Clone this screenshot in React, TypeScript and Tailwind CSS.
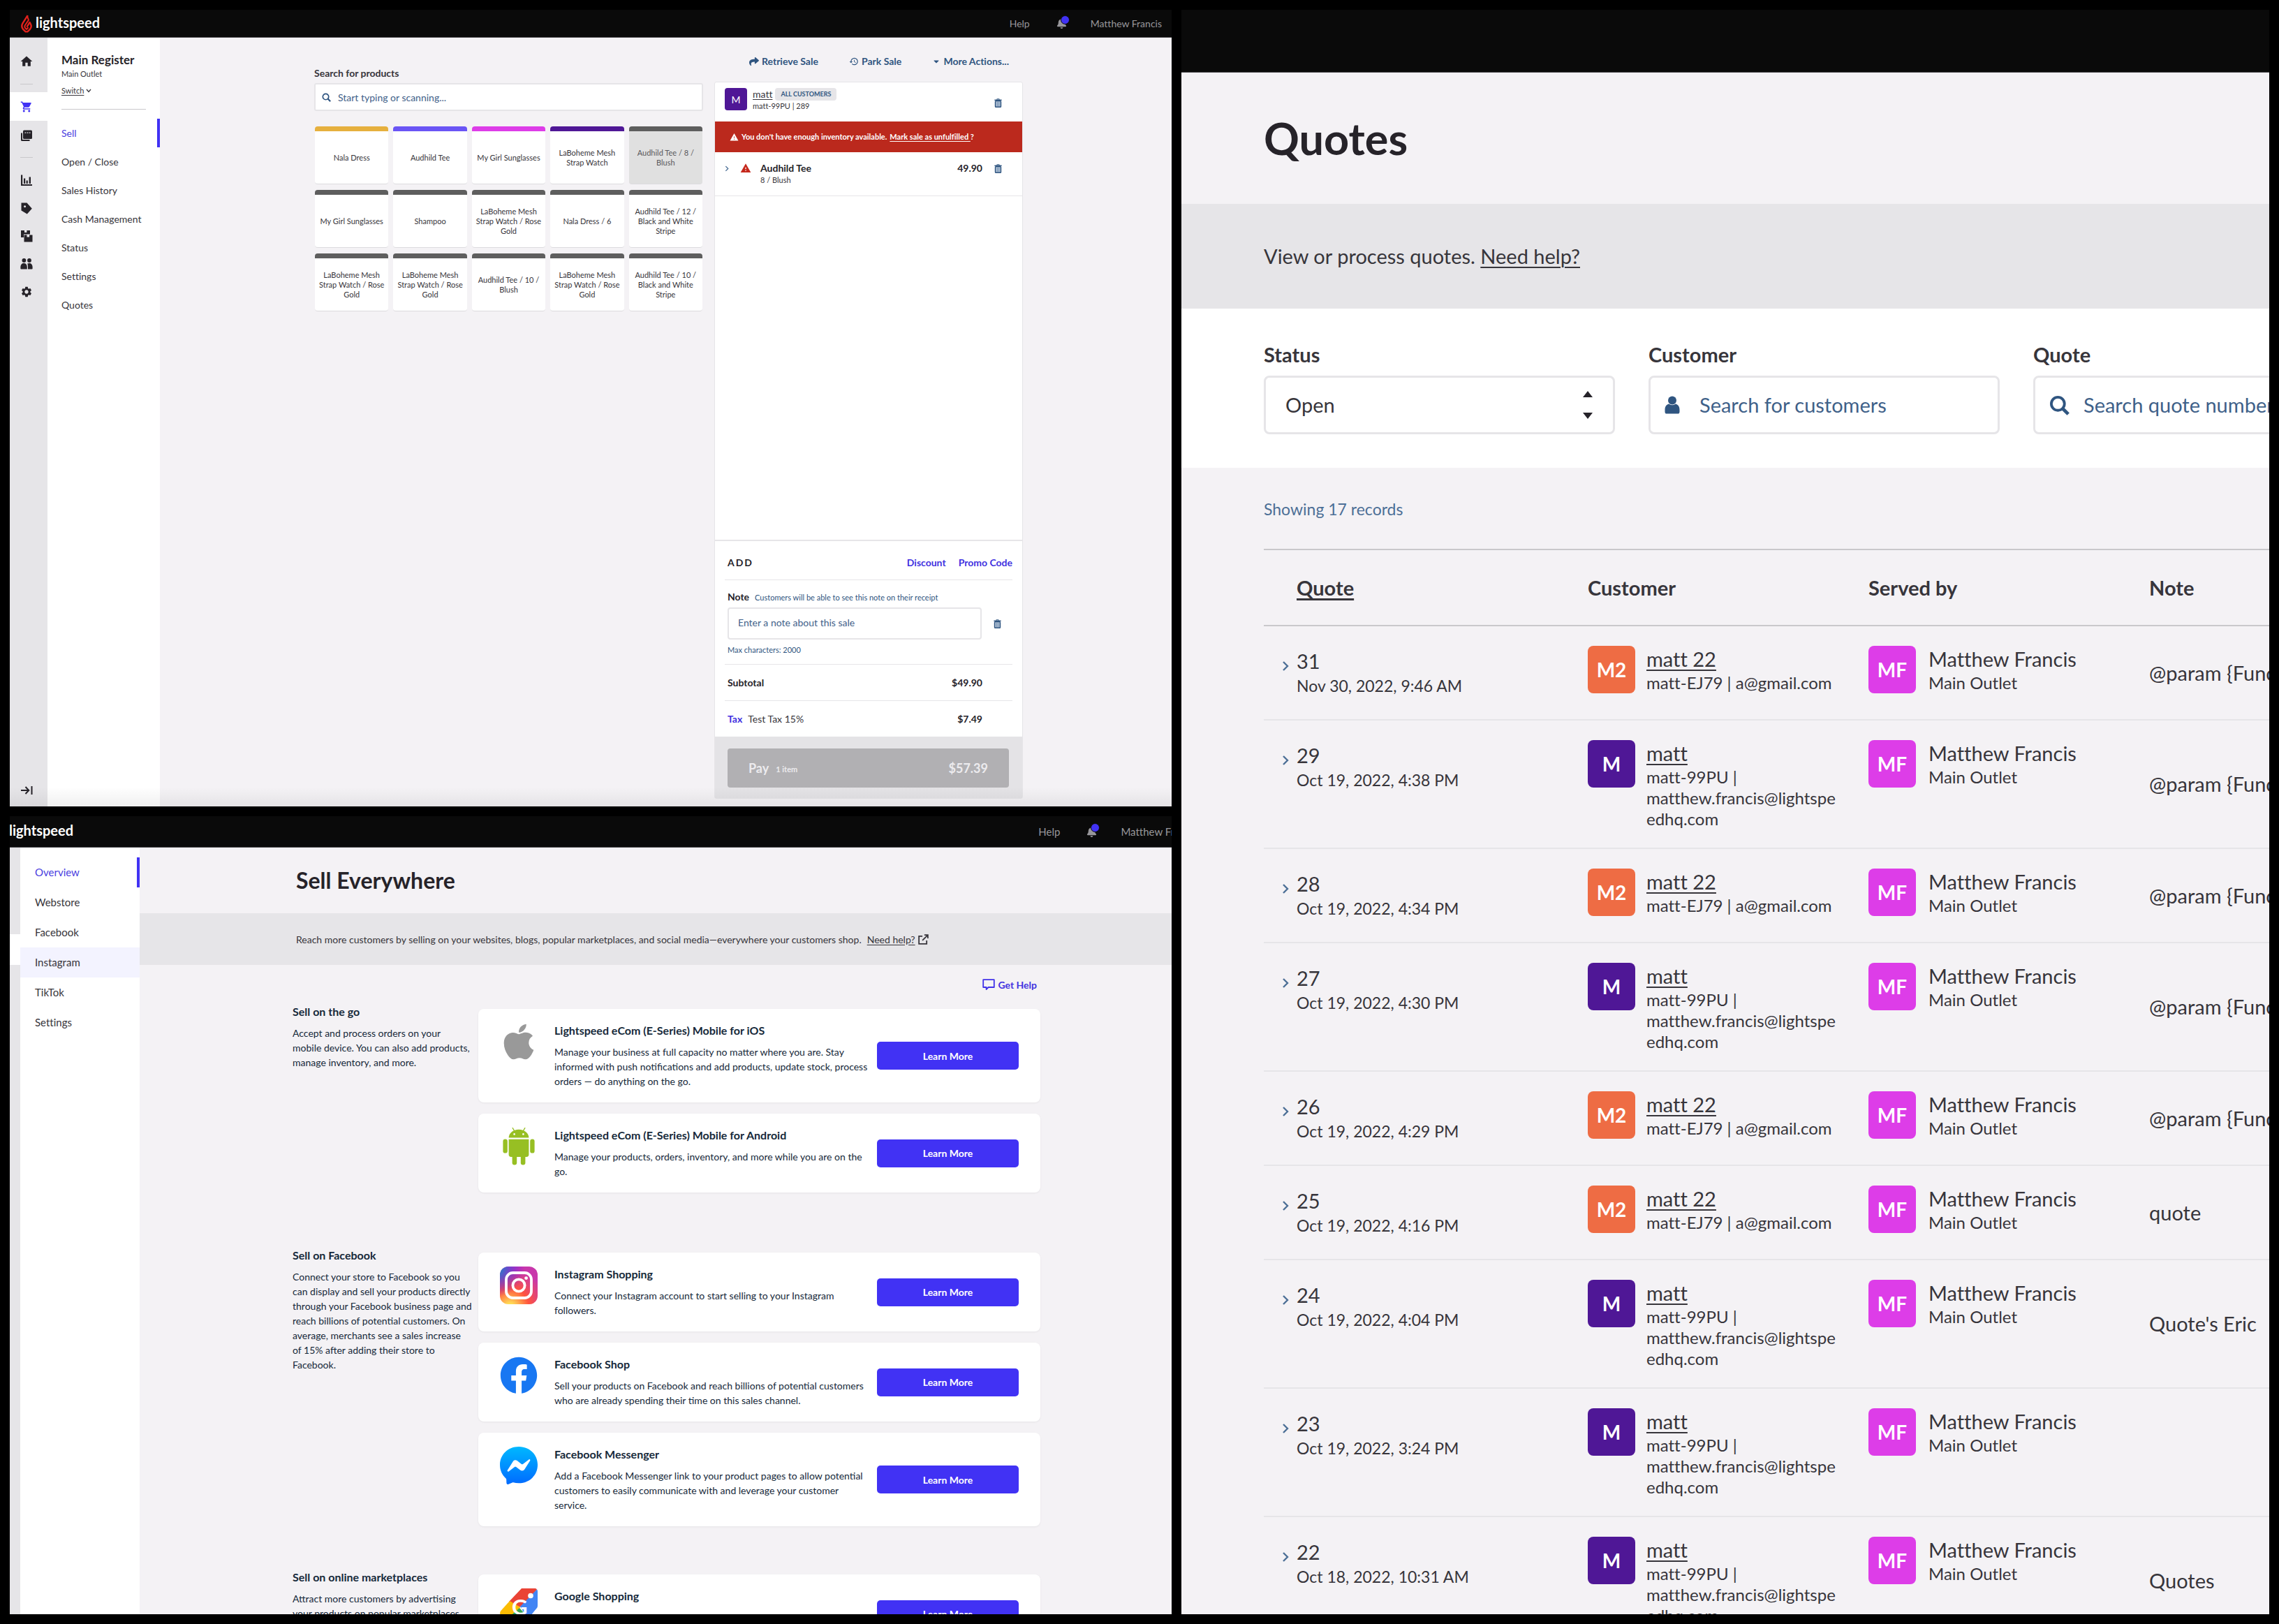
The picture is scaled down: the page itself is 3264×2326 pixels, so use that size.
import type { ReactNode } from 'react';
import { FaApple, FaBell, FaCaretDown, FaFacebook, FaShare } from 'react-icons/fa';
import { MdHistory, MdHome, MdSettings, MdShoppingCart, MdWarning } from 'react-icons/md';

/* ---------- icons ---------- */

function Flame() {
  return (
    <svg viewBox="0 0 16 26" className="h-[26px] w-4 shrink-0" fill="none" stroke="#e3221c" strokeWidth="2.4" strokeLinejoin="round" aria-hidden="true">
      <path d="M9.6 1.2 L2.6 12.2 C0.9 15 1 18.3 3 20.8 L6.6 24.4 H9.4 L13 20.8 C15 18.3 15 15.4 13.8 13.2 L12.6 11 L8.4 17.6" />
      <path d="M9.4 1.2 V3.6 L11 7.6 L5.8 15.2 C5 16.8 5.4 18.4 6.4 19.4 L8 21 L10.6 18.2" strokeWidth="2" />
    </svg>
  );
}

function SearchIcon({ className }: { className: string }) {
  return (
    <svg viewBox="0 0 16 16" className={className} fill="none" stroke="#2f5580" strokeWidth="2.1" aria-hidden="true">
      <circle cx="6.8" cy="6.8" r="5.2" />
      <path d="M10.6 10.6 L15 15" strokeWidth="2.6" />
    </svg>
  );
}

function RegisterIcon() {
  return (
    <svg viewBox="0 0 18 18" className="size-[18px]" fill="#262329" aria-hidden="true">
      <path d="M1 5.5 h2 V15 h10.5 v2 H2.5 A1.5 1.5 0 0 1 1 15.5 Z" />
      <rect x="4" y="1.5" width="13" height="12.5" rx="1.5" />
      <path d="M6.5 4.5 h1.8 v1.3 h-1.8 z M9.6 4.5 h1.8 v1.3 h-1.8 z M12.7 4.5 h1.8 v1.3 h-1.8 z" fill="#e6e5e8" />
    </svg>
  );
}

function ReportIcon() {
  return (
    <svg viewBox="0 0 18 18" className="size-[18px]" fill="#262329" aria-hidden="true">
      <path d="M1 1.5 h2.2 V15 H17 v2 H1 Z" />
      <path d="M5 6.5 h2.2 V14 H5 Z M8.6 9.5 h2.2 V14 H8.6 Z M12.6 4.5 h2.4 V14 h-2.4 Z" />
    </svg>
  );
}

function TagIcon() {
  return (
    <svg viewBox="0 0 18 18" className="size-[18px]" fill="#262329" aria-hidden="true">
      <path fillRule="evenodd" d="M1.5 1.5 H9.5 L16.8 9.8 L9.8 17.6 L1.5 12.5 Z M6.6 5.2 a1.5 1.5 0 1 0 .01 0 Z" />
    </svg>
  );
}

function BoxesIcon() {
  return (
    <svg viewBox="0 0 18 18" className="size-[18px]" fill="#262329" aria-hidden="true">
      <path d="M1 1 h5 v3 h3.4 V1 H14 v5.4 H5 V11 H1 Z" />
      <path d="M5.5 7.5 h4 v3 h3.6 v-3 H17.5 V17.5 H5.5 Z" />
    </svg>
  );
}

function PeopleIcon() {
  return (
    <svg viewBox="0 0 18 18" className="size-[18px]" fill="#262329" aria-hidden="true">
      <circle cx="5.4" cy="4" r="2.9" />
      <circle cx="13" cy="4" r="2.9" />
      <path d="M0.4 13.5 C0.4 10 2.5 8 5.2 8 C8 8 9.8 10 9.8 13.5 V16.6 H1.6 C0.8 16.6 0.4 16 0.4 15.4 Z" />
      <path d="M10.3 8.6 C11 8.2 11.8 8 12.8 8 C15.6 8 17.6 10 17.6 13.5 V15.4 C17.6 16 17.2 16.6 16.4 16.6 H11 V13.5 C11 11.6 10.8 10 10.3 8.6 Z" />
    </svg>
  );
}

function ExpandIcon() {
  return (
    <svg viewBox="0 0 18 14" className="h-[14px] w-[18px]" fill="none" stroke="#262329" strokeWidth="2" aria-hidden="true">
      <path d="M1 7 H12 M7.5 2 L12.3 7 L7.5 12 M16.5 1 V13" />
    </svg>
  );
}

function TrashIcon() {
  return (
    <svg viewBox="0 0 11 13" className="h-[13px] w-[11px]" aria-hidden="true">
      <path d="M3.8 1.8 V0.8 H7.2 V1.8" fill="none" stroke="#2f5580" />
      <rect x="0.4" y="1.6" width="10.2" height="1.5" fill="#2f5580" />
      <rect x="1.5" y="3.6" width="8" height="8.7" rx="0.8" fill="#a9bbd0" stroke="#2f5580" strokeWidth="1.4" />
      <path d="M4.5 5 V11 M6.6 5 V11" stroke="#7390b1" strokeWidth="0.8" />
    </svg>
  );
}

function ChevronRight({ className }: { className: string }) {
  return (
    <svg viewBox="0 0 10 16" className={className} fill="none" stroke="#4c6f96" strokeWidth="2.4" aria-hidden="true">
      <path d="M2 2 L8 8 L2 14" />
    </svg>
  );
}

function ChatIcon() {
  return (
    <svg viewBox="0 0 18 16" className="h-4 w-[18px]" fill="none" stroke="#4132e8" strokeWidth="1.8" strokeLinejoin="round" aria-hidden="true">
      <path d="M1.2 1.2 H16.8 V12 H8.6 L5.6 15 V12 H1.2 Z" />
    </svg>
  );
}

function ExternalIcon() {
  return (
    <svg viewBox="0 0 16 16" className="size-[15px]" fill="none" stroke="#37353b" strokeWidth="1.9" aria-hidden="true">
      <path d="M6.5 3 H1.2 V14.8 H13 V9.5 M9.5 1.2 H14.8 V6.5 M14.6 1.4 L6.5 9.5" />
    </svg>
  );
}

function UserIcon() {
  return (
    <svg viewBox="0 0 22 26" className="h-[26px] w-[22px]" fill="#2f5580" aria-hidden="true">
      <circle cx="11" cy="6.5" r="6" />
      <path d="M0.5 20 C0.5 14.5 3.5 12 6.5 11.6 C9 13.8 13 13.8 15.5 11.6 C18.5 12 21.5 14.5 21.5 20 V23 C21.5 24.6 20.4 25.6 19 25.6 H3 C1.6 25.6 0.5 24.6 0.5 23 Z" />
    </svg>
  );
}

function AndroidLogo() {
  return (
    <svg viewBox="0 0 46 54" className="h-[54px] w-[46px]" fill="#97bf23" aria-hidden="true">
      <path d="M8.6 14.6 C8.6 8 15 2.8 23 2.8 C31 2.8 37.4 8 37.4 14.6 Z" />
      <path d="M14.2 0.6 L17.4 5.8 M31.8 0.6 L28.6 5.8" stroke="#97bf23" strokeWidth="1.3" strokeLinecap="round" />
      <circle cx="16.6" cy="9.4" r="1.3" fill="#fff" />
      <circle cx="29.4" cy="9.4" r="1.3" fill="#fff" />
      <path d="M8.6 16.8 H37.4 V38.6 A3.4 3.4 0 0 1 34 42 H12 A3.4 3.4 0 0 1 8.6 38.6 Z" />
      <rect x="0.4" y="16.6" width="6.4" height="20" rx="3.2" />
      <rect x="39.2" y="16.6" width="6.4" height="20" rx="3.2" />
      <rect x="13.6" y="36" width="6.6" height="17.6" rx="3.3" />
      <rect x="25.8" y="36" width="6.6" height="17.6" rx="3.3" />
    </svg>
  );
}

function InstagramLogo() {
  return (
    <svg viewBox="0 0 54 54" className="size-[54px]" aria-hidden="true">
      <defs>
        <radialGradient id="ig-warm" cx="0.27" cy="1.08" r="1">
          <stop offset="0" stopColor="#ffdd55" />
          <stop offset="0.1" stopColor="#ffdd55" />
          <stop offset="0.5" stopColor="#ff543e" />
          <stop offset="1" stopColor="#c837ab" />
        </radialGradient>
        <radialGradient id="ig-cool" cx="-0.1" cy="0.05" r="0.75">
          <stop offset="0" stopColor="#3771c8" />
          <stop offset="0.2" stopColor="#3771c8" />
          <stop offset="1" stopColor="#6600ff" stopOpacity="0" />
        </radialGradient>
      </defs>
      <rect width="54" height="54" rx="12" fill="url(#ig-warm)" />
      <rect width="54" height="54" rx="12" fill="url(#ig-cool)" />
      <g fill="none" stroke="#fff" strokeWidth="3.8">
        <rect x="9" y="9" width="36" height="36" rx="9.5" />
        <circle cx="27" cy="27" r="8.6" />
      </g>
      <circle cx="37.6" cy="16.6" r="2.4" fill="#fff" />
    </svg>
  );
}

function MessengerLogo() {
  return (
    <svg viewBox="0 0 54 54" className="size-[54px]" aria-hidden="true">
      <defs>
        <linearGradient id="msgr" x1="0" y1="0" x2="0" y2="1">
          <stop offset="0" stopColor="#00b8ff" />
          <stop offset="1" stopColor="#006bff" />
        </linearGradient>
      </defs>
      <path d="M27 0 C11.8 0 0 11.1 0 26.1 C0 34 3.2 40.8 8.5 45.5 C9 45.9 9.2 46.5 9.2 47.1 L9.4 51.9 C9.4 53.4 11 54.4 12.4 53.8 L17.7 51.4 C18.2 51.2 18.7 51.2 19.1 51.3 C21.6 52 24.2 52.3 27 52.3 C42.2 52.3 54 41.2 54 26.1 C54 11.1 42.2 0 27 0 Z" fill="url(#msgr)" />
      <path d="M10.8 33.8 L18.7 21.2 C20 19.2 22.7 18.7 24.6 20.1 L30.9 24.9 C31.5 25.3 32.3 25.3 32.9 24.9 L41.4 18.4 C42.5 17.5 44 18.9 43.2 20.1 L35.3 32.6 C34 34.6 31.3 35.1 29.4 33.7 L23.1 29 C22.5 28.6 21.7 28.6 21.1 29 L12.6 35.5 C11.5 36.3 10 35 10.8 33.8 Z" fill="#fff" />
    </svg>
  );
}

function GoogleShoppingLogo() {
  return (
    <svg viewBox="0 0 54 54" className="size-[54px]" aria-hidden="true">
      <path d="M31 0 L13 19 L29 27 L46 10 L53 1.5 C52.4 .6 51.4 0 50 0 Z" fill="#ea4335" />
      <path d="M14 18 L1.4 32 C-.4 34.2 -.4 36.6 1.4 38.6 L14 52 L29 27 Z" fill="#fbbc04" />
      <path d="M53 1.4 L29 26 L40 44 L53 28 C53.8 26.8 54 26 54 24 V5 C54 3.4 53.8 2.4 53 1.4 Z" fill="#4285f4" />
      <path d="M8 45.5 L28 28 L41 42.5 L31 52.5 C29 54.4 26 54.4 24 52.8 L16 54 Z" fill="#34a853" />
      <circle cx="44" cy="10.5" r="3.8" fill="#fff" />
      <text x="17" y="38" fontFamily="Lato, sans-serif" fontWeight="700" fontSize="31" fill="#fff">G</text>
    </svg>
  );
}

/* ---------- shared ---------- */

function Brand() {
  return (
    <a href="#home" className="flex shrink-0 items-center gap-[5px] text-[20px] leading-6 font-bold text-white" aria-label="lightspeed">
      <Flame />
      <span className="pb-1">lightspeed</span>
    </a>
  );
}

function AccountLinks() {
  return (
    <>
      <a href="#help">Help</a>
      <button type="button" className="relative mr-[30px] ml-[38px] h-4 w-[19px]" aria-label="Notifications">
        <FaBell className="size-[15px] text-[#98979b]" />
        <span className="absolute -top-1 right-0 size-[13px] rounded-full border border-[#0a0a0a] bg-[#4132f4]" />
      </button>
      <a href="#account">Matthew Francis</a>
    </>
  );
}

function NavItem({ label, active, className }: { label: string; active?: boolean; className: string }) {
  return (
    <li>
      <a
        href={`#${label}`}
        className={`flex items-center border-r-4 ${active ? 'border-[#4132f4] text-[#4a3ee0]' : 'border-transparent text-[#37353b]'} ${className}`}
      >
        {label}
      </a>
    </li>
  );
}

/* ---------- register ---------- */

const tiles: { label: string; bar: string; pressed?: boolean }[] = [
  { label: 'Nala Dress', bar: 'bg-[#e6b03e]' },
  { label: 'Audhild Tee', bar: 'bg-[#6a55f5]' },
  { label: 'My Girl Sunglasses', bar: 'bg-[#dd3de8]' },
  { label: 'LaBoheme Mesh Strap Watch', bar: 'bg-[#4f1796]' },
  { label: 'Audhild Tee / 8 / Blush', bar: 'bg-[#5e5e5e]', pressed: true },
  { label: 'My Girl Sunglasses', bar: 'bg-[#5e5e5e]' },
  { label: 'Shampoo', bar: 'bg-[#5e5e5e]' },
  { label: 'LaBoheme Mesh Strap Watch / Rose Gold', bar: 'bg-[#5e5e5e]' },
  { label: 'Nala Dress / 6', bar: 'bg-[#5e5e5e]' },
  { label: 'Audhild Tee / 12 / Black and White Stripe', bar: 'bg-[#5e5e5e]' },
  { label: 'LaBoheme Mesh Strap Watch / Rose Gold', bar: 'bg-[#5e5e5e]' },
  { label: 'LaBoheme Mesh Strap Watch / Rose Gold', bar: 'bg-[#5e5e5e]' },
  { label: 'Audhild Tee / 10 / Blush', bar: 'bg-[#5e5e5e]' },
  { label: 'LaBoheme Mesh Strap Watch / Rose Gold', bar: 'bg-[#5e5e5e]' },
  { label: 'Audhild Tee / 10 / Black and White Stripe', bar: 'bg-[#5e5e5e]' },
];

function RailLink({ label, active, className, children }: { label: string; active?: boolean; className: string; children: ReactNode }) {
  return (
    <a href={`#${label}`} aria-label={label} className={`flex items-center ${active ? 'bg-white' : ''} ${className}`}>
      {children}
    </a>
  );
}

function DeleteButton({ label }: { label: string }) {
  return (
    <button type="button" aria-label={label} className="flex w-[45px] shrink-0 justify-center">
      <TrashIcon />
    </button>
  );
}

function Rail() {
  return (
    <nav aria-label="Main" className="flex w-[54px] shrink-0 flex-col bg-[#e6e5e8] pt-[14px]">
      <RailLink label="Home" className="h-10 pl-[14px]"><MdHome className="size-5 text-[#262329]" /></RailLink>
      <hr className="mt-3 mb-[11px] ml-[15px] w-[18px] border-[#c9c8cb]" />
      <RailLink label="Sell" active className="h-[41px] pl-[15px]"><MdShoppingCart className="size-[18px] text-[#4132f4]" /></RailLink>
      <RailLink label="Register" className="h-[41px] pl-[15px]"><RegisterIcon /></RailLink>
      <hr className="mt-[11px] mb-3 ml-[15px] w-[18px] border-[#c9c8cb]" />
      <RailLink label="Reporting" className="h-10 pl-[15px]"><ReportIcon /></RailLink>
      <RailLink label="Catalog" className="h-10 pl-[15px]"><TagIcon /></RailLink>
      <RailLink label="Inventory" className="h-10 pl-[15px]"><BoxesIcon /></RailLink>
      <RailLink label="Customers" className="h-10 pl-[15px]"><PeopleIcon /></RailLink>
      <RailLink label="Setup" className="h-10 pl-[15px]"><MdSettings className="size-[18px] text-[#262329]" /></RailLink>
      <button type="button" aria-label="Expand menu" className="mt-auto flex h-[46px] items-center pl-[15px]">
        <ExpandIcon />
      </button>
    </nav>
  );
}

function RegisterSidebar() {
  return (
    <aside className="w-[161px] shrink-0 bg-white pt-5">
      <div className="px-5">
        <h2 className="text-[17px] leading-6 font-bold text-[#262329]">Main Register</h2>
        <p className="text-[11px] leading-4">Main Outlet</p>
        <button type="button" className="mt-2 flex items-center gap-[3px] text-[11px] leading-4">
          <span className="underline underline-offset-2">Switch</span>
          <svg viewBox="0 0 8 6" className="h-1.5 w-2" fill="none" stroke="#37353b" strokeWidth="1.3" aria-hidden="true"><path d="M1 1 L4 4.4 L7 1" /></svg>
        </button>
        <hr className="mt-[18px] border-[#c9c8cb]" />
      </div>
      <nav aria-label="Register">
        <ul className="mt-[13px] text-[14px]">
          {['Sell', 'Open / Close', 'Sales History', 'Cash Management', 'Status', 'Settings', 'Quotes'].map((label) => (
            <NavItem key={label} label={label} active={label === 'Sell'} className="h-[41px] pl-5" />
          ))}
        </ul>
      </nav>
    </aside>
  );
}

function Products() {
  return (
    <section className="pt-[41px]">
      <label htmlFor="product-search" className="block text-[14px] leading-5 font-bold">Search for products</label>
      <div className="mt-1 flex h-10 items-center gap-[10px] rounded-[3px] border-2 border-[#e6e5e8] bg-white pl-[9px]">
        <SearchIcon className="size-[13px]" />
        <input id="product-search" type="text" placeholder="Start typing or scanning..." className="min-w-0 flex-1 text-[14px] outline-none placeholder:text-[#3f6189]" />
      </div>
      <div className="mt-[22px] grid grid-cols-5 gap-x-[7px] gap-y-2 px-px">
        {tiles.map((tile, i) => (
          <button
            key={i}
            type="button"
            className={`flex h-[83px] flex-col overflow-hidden rounded-[4px] border-b border-[#dcdbde] text-[11px] leading-[14px] ${tile.pressed ? 'bg-[#e0e0e0] text-[#59585c]' : 'bg-white text-[#37353b]'}`}
          >
            <span className={`h-[7px] w-full shrink-0 ${tile.bar}`} />
            <span className="flex w-full flex-1 items-center justify-center px-1">{tile.label}</span>
          </button>
        ))}
      </div>
    </section>
  );
}

function Cart() {
  return (
    <section className="flex flex-col pb-[11px]">
      <div className="flex h-[63px] justify-between pt-6 pr-5 pl-[50px] text-[14px] leading-5 font-bold text-[#2f5580]">
        <button type="button" className="flex h-5 items-center gap-1"><FaShare className="size-[14px]" />Retrieve Sale</button>
        <button type="button" className="flex h-5 items-center gap-1"><MdHistory className="size-[14px]" />Park Sale</button>
        <button type="button" className="flex h-5 items-center gap-1"><FaCaretDown className="size-3" />More Actions...</button>
      </div>
      <div className="flex flex-1 flex-col rounded-[3px] border border-[#e6e5e8] bg-white">
        <div className="flex h-14 pt-2 pl-[14px]">
          <span className="flex size-8 items-center justify-center rounded-[4px] bg-[#4f1796] text-[14px] text-white">M</span>
          <div className="ml-2">
            <div className="flex h-[18px] items-center gap-1">
              <a href="#matt" className="text-[14px] leading-[18px] underline underline-offset-2">matt</a>
              <span className="rounded-[4px] bg-[#e6e5e8] px-2 text-[9px] leading-[18px] font-bold text-[#2f5580]">ALL CUSTOMERS</span>
            </div>
            <p className="text-[11px] leading-4">matt-99PU | 289</p>
          </div>
          <div className="mr-[12px] ml-auto flex h-[43px] items-center"><DeleteButton label="Remove customer" /></div>
        </div>
        <div className="flex h-11 items-center bg-[#bb291d] pl-[21px] text-[11px] font-bold text-white">
          <MdWarning className="mr-1 size-[13px]" />
          <span>You don't have enough inventory available.</span>
          <a href="#unfulfilled" className="ml-1 underline underline-offset-2">Mark sale as unfulfilled&nbsp;</a>?
        </div>
        <div className="flex h-[63px] items-start border-b border-[#e6e5e8] pt-[13px] pl-[14px]">
          <button type="button" aria-label="Expand line" className="flex h-5 items-center"><ChevronRight className="h-[9px] w-1.5" /></button>
          <MdWarning className="mt-[2px] ml-4 size-4 text-[#c5281c]" />
          <div className="ml-[13px]">
            <p className="text-[14px] leading-5 font-bold text-[#262329]">Audhild Tee</p>
            <p className="text-[11px] leading-[14px]">8 / Blush</p>
          </div>
          <span className="ml-auto text-[14px] leading-5 font-bold text-[#262329]">49.90</span>
          <div className="mr-[12px] flex h-5 items-center"><DeleteButton label="Remove item" /></div>
        </div>
        <div className="mt-auto border-t-2 border-[#e6e5e8] px-[14px] text-[14px] leading-5">
          <div className="flex h-14 items-center gap-[18px] border-b border-[#e6e5e8] pt-1.5 pl-1 font-bold">
            <span className="mr-auto tracking-[2px] text-[#262329]">ADD</span>
            <button type="button" className="text-[#4132e0]">Discount</button>
            <button type="button" className="text-[#4132e0]">Promo Code</button>
          </div>
          <div className="border-b border-[#e6e5e8] pt-[14px] pb-3 pl-1 text-[#2f5580]">
            <div className="flex items-baseline gap-2">
              <label htmlFor="note" className="font-bold text-[#262329]">Note</label>
              <span className="text-[11px]">Customers will be able to see this note on their receipt</span>
            </div>
            <div className="mt-1 flex items-center">
              <input id="note" type="text" placeholder="Enter a note about this sale" className="h-[46px] min-w-0 flex-1 rounded-[4px] border-2 border-[#e6e5e8] px-[13px] pb-1 outline-none placeholder:text-[#3f6189]" />
              <div className="-mr-px"><DeleteButton label="Remove note" /></div>
            </div>
            <p className="mt-[7px] text-[11px] leading-4">Max characters: 2000</p>
          </div>
          <div className="flex h-[52px] items-center justify-between border-b border-[#e6e5e8] pr-[43px] pl-1 font-bold text-[#262329]">
            <span>Subtotal</span>
            <span>$49.90</span>
          </div>
          <div className="flex h-[51px] items-center pr-[43px] pl-1">
            <button type="button" className="mr-2 font-bold text-[#4132e0]">Tax</button>
            <span>Test Tax 15%</span>
            <span className="ml-auto font-bold text-[#262329]">$7.49</span>
          </div>
        </div>
        <div className="bg-[#e4e3e6] pt-[17px] pr-[19px] pb-[15px] pl-[18px]">
          <button type="button" disabled className="flex h-14 w-full items-center rounded-[4px] bg-[#b1b0b3] px-[30px] text-[18px] font-bold text-[#ecebee]">
            <span>Pay</span>
            <span className="mt-1 ml-[10px] text-[11px]">1 item</span>
            <span className="ml-auto">$57.39</span>
          </button>
        </div>
      </div>
    </section>
  );
}

function RegisterScreen() {
  return (
    <section className="relative flex min-h-0 flex-col overflow-hidden bg-[#f4f2f5] [font-variant-ligatures:none]">
      <header className="flex h-10 shrink-0 items-center justify-between border-b border-[#4b4a4d] bg-[#0a0a0a] pr-[14px] pl-4 text-[14px] text-[#98979b]">
        <Brand />
        <div className="flex items-center"><AccountLinks /></div>
      </header>
      <div className="flex min-h-0 flex-1">
        <Rail />
        <RegisterSidebar />
        <main className="grid flex-1 grid-cols-[557fr_442fr] gap-x-4 pr-[213px] pl-[221px]">
          <Products />
          <Cart />
        </main>
      </div>
      <div className="pointer-events-none absolute inset-x-0 bottom-0 h-7 bg-linear-to-b from-transparent to-black/6" />
    </section>
  );
}

/* ---------- sales channels ---------- */

type Channel = { name: string; text: string; logo: ReactNode };

const channels: { title: string; text: string; className: string; items: Channel[] }[] = [
  {
    title: 'Sell on the go',
    text: 'Accept and process orders on your\nmobile device. You can also add products, manage inventory, and more.',
    className: 'pb-[79px]',
    items: [
      {
        name: 'Lightspeed eCom (E-Series) Mobile for iOS',
        text: 'Manage your business at full capacity no matter where you are. Stay informed with push notifications and add products, update stock, process orders — do anything on the go.',
        logo: <FaApple className="h-[58px] w-[58px] shrink-0 text-[#999999]" />,
      },
      {
        name: 'Lightspeed eCom (E-Series) Mobile for Android',
        text: 'Manage your products, orders, inventory, and more while you are on the go.',
        logo: <AndroidLogo />,
      },
    ],
  },
  {
    title: 'Sell on Facebook',
    text: 'Connect your store to Facebook so you can display and sell your products directly through your Facebook business page and reach billions of potential customers. On average, merchants see a sales increase\nof 15% after adding their store to Facebook.',
    className: 'pb-[62px]',
    items: [
      {
        name: 'Instagram Shopping',
        text: 'Connect your Instagram account to start selling to your Instagram followers.',
        logo: <InstagramLogo />,
      },
      {
        name: 'Facebook Shop',
        text: 'Sell your products on Facebook and reach billions of potential customers who are already spending their time on this sales channel.',
        logo: <FaFacebook className="size-[54px] text-[#1877f2]" />,
      },
      {
        name: 'Facebook Messenger',
        text: 'Add a Facebook Messenger link to your product pages to allow potential customers to easily communicate with and leverage your customer service.',
        logo: <MessengerLogo />,
      },
    ],
  },
  {
    title: 'Sell on online marketplaces',
    text: 'Attract more customers by advertising your products on popular marketplaces.',
    className: '',
    items: [
      {
        name: 'Google Shopping',
        text: 'Increase visibility and connect with more shoppers by listing your products on Google.',
        logo: <GoogleShoppingLogo />,
      },
    ],
  },
];

function ChannelCard({ name, text, logo }: Channel) {
  return (
    <article className="flex items-center rounded-[8px] bg-white px-[31px] py-5 shadow-[0_1px_3px_rgba(0,0,0,0.06)]">
      <div className="flex h-[54px] w-[54px] shrink-0 items-center justify-center self-start">{logo}</div>
      <div className="ml-6 w-[450px] self-start">
        <h3 className="text-[16px] leading-[22px] font-bold">{name}</h3>
        <p className="mt-[9px] text-[14px] leading-[21px]">{text}</p>
      </div>
      <button type="button" className="ml-auto h-10 w-[203px] shrink-0 rounded-[5px] bg-[#4132f4] text-[14px] font-bold text-white">
        Learn More
      </button>
    </article>
  );
}

function ChannelsScreen() {
  return (
    <section className="flex min-h-0 flex-col overflow-hidden bg-[#f4f2f5] [font-variant-ligatures:none]">
      <header className="flex h-[45px] shrink-0 items-center justify-between border-b border-[#4b4a4d] bg-[#0a0a0a] text-[15px] text-[#98979b]">
        <div className="-ml-[22px]"><Brand /></div>
        <div className="-mr-[37px] flex items-center whitespace-nowrap"><AccountLinks /></div>
      </header>
      <div className="flex min-h-0 flex-1">
        <div className="w-[15px] shrink-0 bg-[#e6e5e8] pt-[124px]">
          <div className="h-11 bg-white" />
        </div>
        <nav aria-label="Sales channels" className="w-[171px] shrink-0 bg-white pt-[14px]">
          <ul className="text-[15px]">
            {['Overview', 'Webstore', 'Facebook', 'Instagram', 'TikTok', 'Settings'].map((label) => (
              <NavItem key={label} label={label} active={label === 'Overview'} className={`h-[43px] pl-[21px] ${label === 'Instagram' ? 'bg-[#f3f3ff]' : ''}`} />
            ))}
          </ul>
        </nav>
        <main className="min-w-0 flex-1">
          <div className="flex h-[94px] items-center pl-[224px]">
            <h1 className="text-[32px] leading-10 font-bold text-[#262329]">Sell Everywhere</h1>
          </div>
          <div className="flex h-[74px] items-center bg-[#e6e5e8] pl-[224px] text-[14px]">
            <p>Reach more customers by selling on your websites, blogs, popular marketplaces, and social media—everywhere your customers shop.</p>
            <a href="#need-help" className="ml-2 flex items-center gap-1"><span className="underline underline-offset-2">Need help?</span> <ExternalIcon /></a>
          </div>
          <div className="pr-[188px] pl-[219px] text-[#16293a] [font-variant-ligatures:normal]">
            <div className="mb-[18px] flex justify-end pt-[18px] pr-[5px]">
              <a href="#get-help" className="flex h-5 items-center gap-1 text-[14px] font-bold text-[#4132e0]"><ChatIcon />Get Help</a>
            </div>
            {channels.map((group) => (
              <section key={group.title} className={`grid grid-cols-[260px_1fr] gap-x-1.5 ${group.className}`}>
                <div>
                  <h2 className="text-[16px] leading-[22px] font-bold">{group.title}</h2>
                  <p className="mt-[9px] text-[14px] leading-[21px] whitespace-pre-line">{group.text}</p>
                </div>
                <div className="flex flex-col gap-4 pt-[7px]">
                  {group.items.map((item) => (
                    <ChannelCard key={item.name} {...item} />
                  ))}
                </div>
              </section>
            ))}
          </div>
        </main>
      </div>
    </section>
  );
}

/* ---------- quotes ---------- */

const quotes: { id: string; date: string; known: boolean; note: string }[] = [
  { id: '31', date: 'Nov 30, 2022, 9:46 AM', known: false, note: '@param {Function}' },
  { id: '29', date: 'Oct 19, 2022, 4:38 PM', known: true, note: '@param {Function}' },
  { id: '28', date: 'Oct 19, 2022, 4:34 PM', known: false, note: '@param {Function}' },
  { id: '27', date: 'Oct 19, 2022, 4:30 PM', known: true, note: '@param {Function}' },
  { id: '26', date: 'Oct 19, 2022, 4:29 PM', known: false, note: '@param {Function}' },
  { id: '25', date: 'Oct 19, 2022, 4:16 PM', known: false, note: 'quote' },
  { id: '24', date: 'Oct 19, 2022, 4:04 PM', known: true, note: "Quote's Eric" },
  { id: '23', date: 'Oct 19, 2022, 3:24 PM', known: true, note: '' },
  { id: '22', date: 'Oct 18, 2022, 10:31 AM', known: true, note: 'Quotes' },
];

function Avatar({ text, className }: { text: string; className: string }) {
  return (
    <span className={`flex size-[68px] shrink-0 items-center justify-center rounded-[8px] text-[28px] font-bold text-white ${className}`}>{text}</span>
  );
}

function QuoteRow({ quote }: { quote: (typeof quotes)[number] }) {
  const cell = `border-b-2 border-[#e6e5e8] align-top ${quote.known ? 'h-[184px]' : 'h-[135px]'}`;
  return (
    <tr>
      <td className={cell}>
        <div className="flex pt-[30px] pl-[26px]">
          <button type="button" aria-label={`Expand quote ${quote.id}`} className="mt-[19px] h-4"><ChevronRight className="h-4 w-[10px]" /></button>
          <div className="ml-[11px]">
            <p className="leading-10">{quote.id}</p>
            <p className="text-[23px] leading-[30px]">{quote.date}</p>
          </div>
        </div>
      </td>
      <td className={cell}>
        <div className="flex gap-4 pt-7">
          <Avatar text={quote.known ? 'M' : 'M2'} className={quote.known ? 'bg-[#4f1796]' : 'bg-[#ee6c44]'} />
          <div className="w-[276px] break-words">
            <a href="#customer" className="block leading-[38px] underline decoration-2 underline-offset-4">{quote.known ? 'matt' : 'matt 22'}</a>
            <p className="text-[24px] leading-[30px]">{quote.known ? 'matt-99PU | matthew.francis@lightspeedhq.com' : 'matt-EJ79 | a@gmail.com'}</p>
          </div>
        </div>
      </td>
      <td className={cell}>
        <div className="flex gap-[18px] pt-7">
          <Avatar text="MF" className="bg-[#dd3de8]" />
          <div>
            <p className="leading-[38px]">Matthew Francis</p>
            <p className="text-[24px] leading-[30px]">Main Outlet</p>
          </div>
        </div>
      </td>
      <td className={`overflow-hidden border-b-2 border-[#e6e5e8] align-middle whitespace-nowrap ${quote.known ? 'h-[184px]' : 'h-[135px]'}`}>{quote.note}</td>
    </tr>
  );
}

function QuotesScreen() {
  return (
    <section className="flex min-h-0 min-w-0 flex-col overflow-hidden bg-[#f4f2f5] text-[29px] [font-variant-ligatures:none]">
      <header className="h-[90px] shrink-0 border-b border-[#4b4a4d] bg-[#0a0a0a]" />
      <div className="flex h-[188px] shrink-0 items-center pl-[118px]">
        <h1 className="text-[63px] leading-[80px] font-bold text-[#262329]">Quotes</h1>
      </div>
      <div className="flex h-[150px] shrink-0 items-center bg-[#e6e5e8] pl-[118px]">
        <p>View or process quotes. <a href="#help" className="underline decoration-2 underline-offset-4">Need help?</a></p>
      </div>
      <form className="flex shrink-0 gap-12 bg-white pt-12 pb-12 pl-[118px]">
        <div className="w-[503px] shrink-0">
          <label htmlFor="status" className="block leading-9 font-bold">Status</label>
          <div className="relative mt-3">
            <select id="status" defaultValue="Open" className="h-[84px] w-full appearance-none rounded-[8px] border-3 border-[#e6e5e8] bg-white pl-[28px]">
              <option>Open</option>
              <option>Closed</option>
            </select>
            <svg viewBox="0 0 16 40" className="pointer-events-none absolute top-[22px] right-[31px] h-10 w-4" fill="#262329" aria-hidden="true">
              <path d="M8 0 L15 9 H1 Z M1 31 H15 L8 40 Z" />
            </svg>
          </div>
        </div>
        <div className="w-[503px] shrink-0">
          <label htmlFor="customer" className="block leading-9 font-bold">Customer</label>
          <div className="mt-3 flex h-[84px] items-center gap-7 rounded-[8px] border-3 border-[#e6e5e8] bg-white pl-5">
            <UserIcon />
            <input id="customer" type="text" placeholder="Search for customers" className="min-w-0 flex-1 outline-none placeholder:text-[#3f6189]" />
          </div>
        </div>
        <div className="w-[503px] shrink-0">
          <label htmlFor="quote" className="block leading-9 font-bold">Quote</label>
          <div className="mt-3 flex h-[84px] items-center gap-5 rounded-[8px] border-3 border-[#e6e5e8] bg-white pl-5">
            <SearchIcon className="size-[29px]" />
            <input id="quote" type="text" placeholder="Search quote numbers" className="min-w-0 flex-1 outline-none placeholder:text-[#3f6189]" />
          </div>
        </div>
      </form>
      <div className="pt-[42px] pl-[118px]">
        <p className="text-[23px] leading-[34px] text-[#4c6f96]">Showing 17 records</p>
        <table className="mt-10 w-full table-fixed border-separate border-spacing-0 text-left">
          <thead>
            <tr>
              <th className="h-[111px] w-[464px] border-y-2 border-[#c9c8cb] pl-[47px]"><a href="#sort" className="underline decoration-3 underline-offset-4">Quote</a></th>
              <th className="w-[402px] border-y-2 border-[#c9c8cb]">Customer</th>
              <th className="w-[402px] border-y-2 border-[#c9c8cb]">Served by</th>
              <th className="border-y-2 border-[#c9c8cb]">Note</th>
            </tr>
          </thead>
          <tbody>
            {quotes.map((quote) => (
              <QuoteRow key={quote.id} quote={quote} />
            ))}
          </tbody>
        </table>
      </div>
    </section>
  );
}

export default function App() {
  return (
    <div className="grid h-screen grid-cols-[1664fr_1558fr] gap-[14px] bg-black p-[14px] font-['Lato',sans-serif] text-[#37353b]">
      <div className="grid min-h-0 min-w-0 grid-rows-[1141fr_1143fr] gap-[14px]">
        <RegisterScreen />
        <ChannelsScreen />
      </div>
      <QuotesScreen />
    </div>
  );
}
